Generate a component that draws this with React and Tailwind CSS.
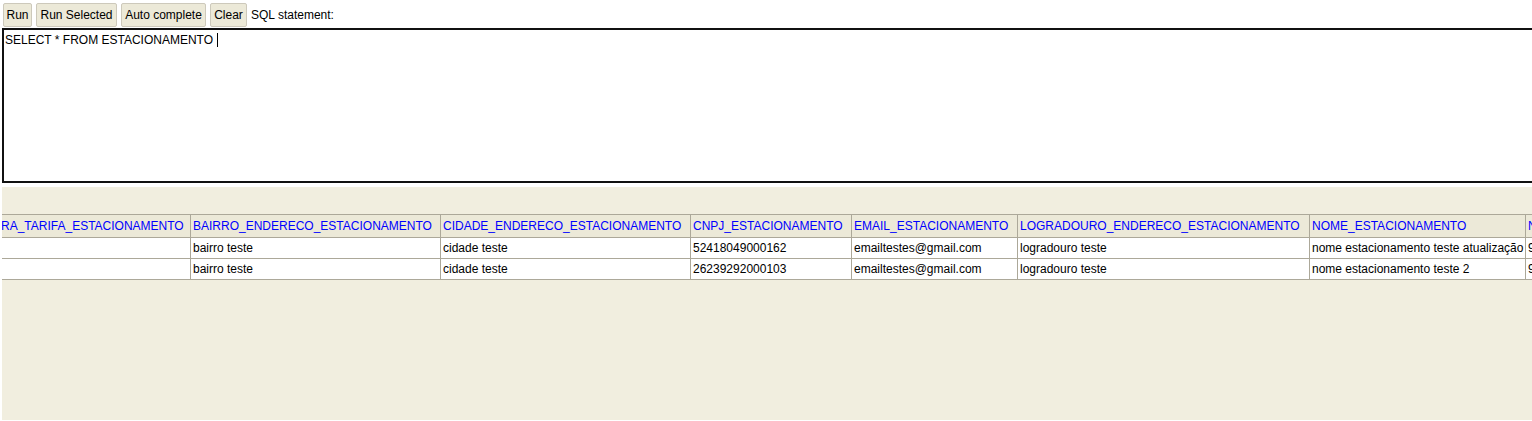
import React from "react";

const cols = [
  { name: "RA_TARIFA_ESTACIONAMENTO", w: 198, first: true },
  { name: "BAIRRO_ENDERECO_ESTACIONAMENTO", w: 250 },
  { name: "CIDADE_ENDERECO_ESTACIONAMENTO", w: 250 },
  { name: "CNPJ_ESTACIONAMENTO", w: 161 },
  { name: "EMAIL_ESTACIONAMENTO", w: 166 },
  { name: "LOGRADOURO_ENDERECO_ESTACIONAMENTO", w: 292 },
  { name: "NOME_ESTACIONAMENTO", w: 216 },
  { name: "NUMERO_ENDERECO_ESTACIONAMENTO", w: 250 },
];

const rows = [
  ["", "bairro teste", "cidade teste", "52418049000162", "emailtestes@gmail.com", "logradouro teste", "nome estacionamento teste atualização", "99"],
  ["", "bairro teste", "cidade teste", "26239292000103", "emailtestes@gmail.com", "logradouro teste", "nome estacionamento teste 2", "99"],
];

function Btn({ children, className }) {
  return (
    <button className={`h-[24px] px-0 bg-[#ece9d8] border border-[#cdc9bb] rounded-[2px] text-[12px] text-black leading-none ${className}`}>
      {children}
    </button>
  );
}

export default function App() {
  return (
    <div className="w-[1532px] h-[421px] bg-white overflow-hidden" style={{ fontFamily: '"Liberation Sans", Arial, sans-serif' }}>
      <div className="flex items-center gap-[4px] pl-[3px] pt-[3px] h-[27px]">
        <Btn className="w-[29px]">Run</Btn>
        <Btn className="w-[81px]">Run Selected</Btn>
        <Btn className="w-[85px]">Auto complete</Btn>
        <Btn className="w-[37px]">Clear</Btn>
        <span className="text-[12px] text-black">SQL statement:</span>
      </div>
      <div className="ml-[2px] mt-[1px] h-[155px] w-[1540px] border-2 border-[#111] bg-white pl-[1px] pt-[3px]">
        <div className="text-[12px] leading-[14px] text-black flex items-center">
          <span>SELECT * FROM ESTACIONAMENTO</span>
          <span className="inline-block w-[1px] h-[14px] bg-black ml-[4px]"></span>
        </div>
      </div>
      <div className="ml-[2px] mt-[4px] h-[233px] bg-[#f1eedf] overflow-hidden pt-[27px]">
        <table className="table-fixed border-collapse ml-[-10px] text-[12px]" style={{ width: cols.reduce((a, c) => a + c.w, 0) }}>
          <colgroup>
            {cols.map((c) => (
              <col key={c.name} style={{ width: c.w }} />
            ))}
          </colgroup>
          <thead>
            <tr className="h-[23px]">
              {cols.map((c) => (
                <th
                  key={c.name}
                  className={`border border-[#aca899] bg-[#ece9d8] text-left font-normal text-[#0000ff] whitespace-nowrap overflow-hidden ${c.first ? "pl-[8px]" : "pl-[2px]"}`}
                >
                  {c.name}
                </th>
              ))}
            </tr>
          </thead>
          <tbody>
            {rows.map((r, i) => (
              <tr key={i} className="h-[21px]">
                {r.map((v, j) => (
                  <td key={j} className="border border-[#aca899] bg-white text-black whitespace-nowrap overflow-hidden pl-[2px]">
                    {v}
                  </td>
                ))}
              </tr>
            ))}
          </tbody>
        </table>
      </div>
    </div>
  );
}
